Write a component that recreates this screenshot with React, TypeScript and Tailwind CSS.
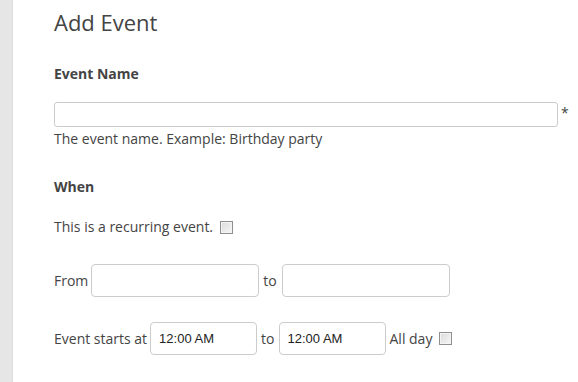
import React from "react";

// Add Event form
const Checkbox = ({ className = "" }: { className?: string }) => (
  <span
    className={`inline-block h-[13px] w-[13px] border border-[#8e8f8f] bg-gradient-to-br from-[#dcdcdc] to-[#f6f6f6] shadow-[inset_0_0_0_1px_#f4f4f4] ${className}`}
  />
);

const TextBox = ({ width, value = "" }: { width: string; value?: string }) => (
  <input
    readOnly
    defaultValue={value}
    className={`${width} h-[33px] rounded-[4px] border border-[#cccccc] bg-white px-[8px] font-['Liberation_Sans',Arial,sans-serif] text-[13px] text-[#222] outline-none`}
  />
);

const App = () => {
  return (
    <div className="flex min-h-[382px] bg-white font-['Open_Sans',sans-serif] text-[14px] text-[#444]">
      <div className="w-[13px] shrink-0 bg-[#e6e6e6] shadow-[inset_-1px_0_0_#dcdcdc]" />
      <div className="flex-1 pl-[41px]">
        <h1 className="mt-[9px] text-[22px] leading-[26px] font-normal text-[#444]">
          Add Event
        </h1>

        <p className="mt-[29px] leading-[20px] font-bold">Event Name</p>
        <div className="mt-[18px] flex items-start">
          <input
            readOnly
            className="h-[25px] w-[504px] rounded-[3px] border border-[#cccccc] bg-white outline-none"
          />
          <span className="ml-[3px] mt-[2px] text-[14px] leading-[18px]">*</span>
        </div>
        <p className="mt-[2px] leading-[20px]">
          The event name. Example: Birthday party
        </p>

        <p className="mt-[28px] leading-[20px] font-bold">When</p>
        <div className="mt-[20px] flex items-center leading-[20px]">
          <span>This is a recurring event.</span>
          <Checkbox className="ml-[7px]" />
        </div>

        <div className="mt-[27px] flex items-center">
          <span className="mr-[3px]">From</span>
          <TextBox width="w-[168px]" />
          <span className="ml-[4px] mr-[5px]">to</span>
          <TextBox width="w-[168px]" />
        </div>

        <div className="mt-[25px] flex items-center">
          <span className="mr-[3px]">Event starts at</span>
          <TextBox width="w-[107px]" value="12:00 AM" />
          <span className="mx-[4px]">to</span>
          <TextBox width="w-[107px]" value="12:00 AM" />
          <span className="ml-[4px]">All day</span>
          <Checkbox className="ml-[7px]" />
        </div>
      </div>
    </div>
  );
};

export default App;
